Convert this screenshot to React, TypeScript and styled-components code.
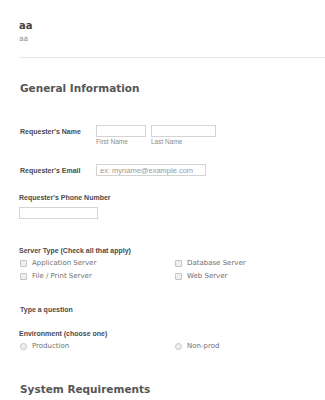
import React from 'react'
import styled, { createGlobalStyle } from 'styled-components'

const GlobalStyle = createGlobalStyle`
  html, body {
    margin: 0;
    padding: 0;
    background: #ffffff;
  }
  * {
    box-sizing: border-box;
  }
`

const Page = styled.div`
  width: 325px;
  height: 400px;
  overflow: hidden;
  padding-left: 19px;
  font-family: 'Liberation Sans', Arial, sans-serif;
`

const Header = styled.div`
  padding-top: 20px;
`

const FormTitle = styled.div`
  font-size: 10px;
  line-height: 12px;
  font-weight: bold;
  color: #444444;
  font-family: 'DejaVu Sans', Verdana, sans-serif;
`

const FormSubtitle = styled.div`
  margin-top: 2px;
  font-size: 7.5px;
  line-height: 10px;
  color: #8f8f8f;
  font-family: 'DejaVu Sans', Verdana, sans-serif;
`

const Divider = styled.div`
  margin-top: 13px;
  height: 1px;
  background: #e8e8e8;
`

const SectionHeading = styled.h2<{ $top: number }>`
  margin: ${p => p.$top}px 0 0 1px;
  font-family: 'DejaVu Sans', Verdana, sans-serif;
  font-size: 10.5px;
  line-height: 14px;
  font-weight: bold;
  color: #555555;
`

const Label = styled.div<{ $indent?: boolean }>`
  font-size: 7px;
  line-height: 9px;
  font-weight: bold;
  color: #4a4a4a;
  padding-left: ${p => (p.$indent ? 1 : 0)}px;
`

const InlineRow = styled.div<{ $top: number }>`
  display: flex;
  margin-top: ${p => p.$top}px;
`

const InlineLabel = styled(Label)`
  width: 77px;
  padding-left: 1px;
  padding-top: 1.5px;
`

const Fields = styled.div`
  display: flex;
  gap: 5px;
`

const Field = styled.div`
  display: flex;
  flex-direction: column;
`

const TextInput = styled.input<{ $w: number }>`
  width: ${p => p.$w}px;
  height: 12px;
  margin: 0;
  padding: 0 0 0 3px;
  border: 1px solid #d4d4d4;
  border-radius: 0;
  background: #ffffff;
  font-family: 'Liberation Sans', Arial, sans-serif;
  font-size: 7.5px;
  color: #555;
  outline: none;
  &::placeholder {
    color: #9a9a9a;
  }
`

const SubLabel = styled.span`
  margin-top: 1px;
  font-size: 6.5px;
  line-height: 8px;
  color: #8c8c8c;
`

const Block = styled.div<{ $top: number }>`
  margin-top: ${p => p.$top}px;
`

const StackedInput = styled(TextInput)`
  display: block;
  margin-top: 4.5px;
`

const OptionGrid = styled.div`
  display: grid;
  grid-template-columns: 155px 1fr;
  margin-top: 2px;
`

const Option = styled.label`
  display: flex;
  align-items: center;
  gap: 5px;
  height: 13px;
  padding-left: 1px;
  font-family: 'DejaVu Sans', Verdana, sans-serif;
  font-size: 7px;
  color: #707070;
`

const Box = styled.span<{ $round?: boolean }>`
  width: 7px;
  height: 7px;
  border: 1px solid #c4c4c4;
  background: #efefef;
  border-radius: ${p => (p.$round ? '50%' : '1px')};
  flex-shrink: 0;
`

const serverTypes = ['Application Server', 'Database Server', 'File / Print Server', 'Web Server']

export default function App() {
  return (
    <>
      <GlobalStyle />
      <Page>
        <Header>
          <FormTitle>aa</FormTitle>
          <FormSubtitle>aa</FormSubtitle>
        </Header>
        <Divider />

        <SectionHeading $top={23}>General Information</SectionHeading>

        <InlineRow $top={30}>
          <InlineLabel>Requester's Name</InlineLabel>
          <Fields>
            <Field>
              <TextInput $w={50} />
              <SubLabel>First Name</SubLabel>
            </Field>
            <Field>
              <TextInput $w={65} />
              <SubLabel>Last Name</SubLabel>
            </Field>
          </Fields>
        </InlineRow>

        <InlineRow $top={18}>
          <InlineLabel>Requester's Email</InlineLabel>
          <TextInput $w={110} placeholder="ex: myname@example.com" />
        </InlineRow>

        <Block $top={17}>
          <Label>Requester's Phone Number</Label>
          <StackedInput $w={79} />
        </Block>

        <Block $top={27}>
          <Label>Server Type (Check all that apply)</Label>
          <OptionGrid>
            {serverTypes.map(s => (
              <Option key={s}>
                <Box />
                {s}
              </Option>
            ))}
          </OptionGrid>
        </Block>

        <Block $top={22}>
          <Label $indent>Type a question</Label>
        </Block>

        <Block $top={15}>
          <Label>Environment (choose one)</Label>
          <OptionGrid>
            <Option>
              <Box $round />
              Production
            </Option>
            <Option>
              <Box $round />
              Non-prod
            </Option>
          </OptionGrid>
        </Block>

        <SectionHeading $top={29}>System Requirements</SectionHeading>
      </Page>
    </>
  )
}
